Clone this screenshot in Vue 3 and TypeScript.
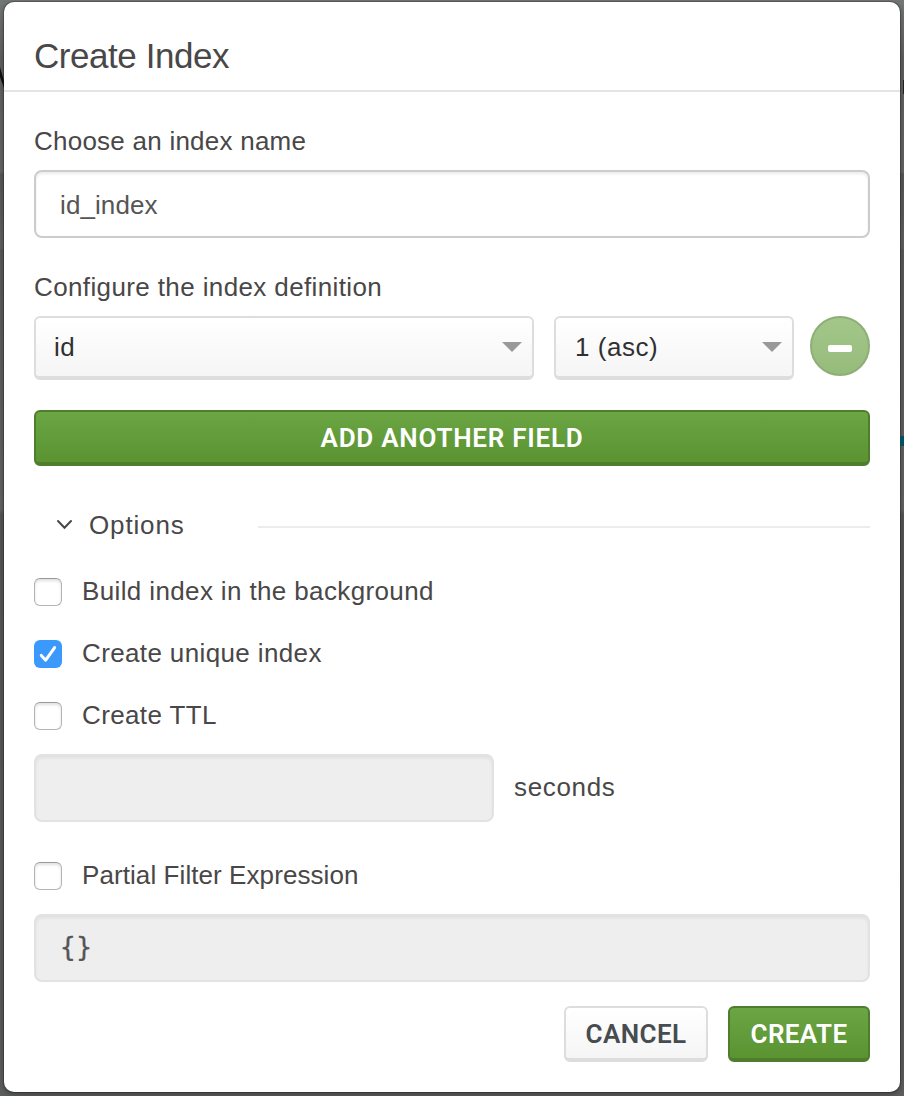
<script setup lang="ts">
import { reactive } from 'vue'

interface Option {
  key: string
  label: string
  checked: boolean
}

const basic = reactive<Option[]>([
  { key: 'background', label: 'Build index in the background', checked: false },
  { key: 'unique', label: 'Create unique index', checked: true },
  { key: 'ttl', label: 'Create TTL', checked: false },
])
const partial = reactive<Option>({ key: 'partial', label: 'Partial Filter Expression', checked: false })

function toggle(option: Option): void {
  option.checked = !option.checked
}
</script>

<template>
  <div class="backdrop">
    <svg class="behind glyph" width="4" height="22" viewBox="0 0 4 22"><path d="M0 0L4 14V21L0 10Z" fill="#111" /></svg>
    <i class="behind mark"></i>
    <i class="behind teal"></i>
    <section class="modal">
      <header class="header"><span class="title">Create Index</span></header>
      <div class="body">
        <div class="label name-label"><span>Choose an index name</span></div>
        <div class="input"><span class="name-value">id_index</span></div>

        <div class="label definition-label"><span>Configure the index definition</span></div>
        <div class="field-row">
          <div class="select field"><span>id</span>
            <svg class="caret" width="20" height="10" viewBox="0 0 20 10"><path d="M0 0H20L10 10Z" fill="#999" /></svg>
          </div>
          <div class="select order"><span>1 (asc)</span>
            <svg class="caret" width="20" height="10" viewBox="0 0 20 10"><path d="M0 0H20L10 10Z" fill="#999" /></svg>
          </div>
          <div class="remove"><span class="minus"></span></div>
        </div>
        <button class="btn primary add"><span>ADD ANOTHER FIELD</span></button>

        <div class="options-head">
          <svg class="chevron" width="18" height="12" viewBox="0 0 18 12"><path d="M2 2L8.5 8.7L15 2" fill="none" stroke="#494747" stroke-width="2" stroke-linecap="round" /></svg>
          <span class="options-text">Options</span>
          <span class="rule"></span>
        </div>

        <div v-for="option in basic" :key="option.key" class="check-row" :class="option.key" @click="toggle(option)">
          <span class="box" :class="{ on: option.checked }">
            <svg v-if="option.checked" width="28" height="28" viewBox="0 0 28 28"><path d="M7.3 15.4L11.7 20.2L20.6 7.6" fill="none" stroke="#fff" stroke-width="3" stroke-linecap="round" stroke-linejoin="round" /></svg>
          </span>
          <span class="check-text">{{ option.label }}</span>
        </div>
        <div class="ttl-row">
          <div class="input disabled ttl-input"></div>
          <span class="seconds">seconds</span>
        </div>

        <div class="check-row partial" @click="toggle(partial)">
          <span class="box" :class="{ on: partial.checked }"></span>
          <span class="check-text">{{ partial.label }}</span>
        </div>
        <div class="input disabled filter-input"><span class="mono">{}</span></div>

        <footer class="footer">
          <button class="btn plain"><span>CANCEL</span></button>
          <button class="btn primary create"><span>CREATE</span></button>
        </footer>
      </div>
    </section>
  </div>
</template>

<style>
body { margin: 0; background: #4d4c4b; }
</style>

<style scoped>
* { box-sizing: border-box; }
.backdrop {
  position: relative;
  height: 1096px;
  padding: 2px 4px 4px;
  overflow: hidden;
  background: linear-gradient(#737776 0, #5f605f 60px, #646665 172px, #585858 174px, #626160 248px, #5c5a58 250px, #656361 510px, #585654 514px, #5c5a58 1000px, #5c5e5e 1096px);
  font-family: "Liberation Sans", Arial, sans-serif;
  font-size: 26px;
  color: #494747;
}
.behind { position: absolute; }
.glyph { left: 0; top: 67px; }
.mark { left: 903px; top: 80px; width: 1px; height: 14px; background: #222; }
.teal { left: 900px; top: 436px; width: 4px; height: 10px; background: #00505f; z-index: 1; }
.modal {
  position: relative;
  height: 1090px;
  background: #fff;
  border-radius: 10px;
  box-shadow: 0 0 0 1px rgba(0, 0, 0, .2), 0 2px 6px rgba(0, 0, 0, .35);
}
.header {
  height: 90px;
  padding: 34px 30px 0;
  border-bottom: 2px solid #e4e4e4;
  line-height: 40px;
}
.title { font-size: 35px; letter-spacing: -.45px; }
.body { display: flex; flex-direction: column; padding: 29px 30px 0; }
.label { height: 40px; line-height: 40px; margin-bottom: 9px; }
.name-label { letter-spacing: .24px; }
.definition-label { margin-top: 29px; letter-spacing: .38px; }
.input {
  height: 68px;
  padding: 1px 24px 0;
  border: 2px solid #ccc;
  border-radius: 8px;
  line-height: 64px;
  color: #555;
  box-shadow: inset 0 2px 3px rgba(0, 0, 0, .08);
}
.disabled { background: #eee; border-color: #e2e2e2; box-shadow: inset 0 2px 3px rgba(0, 0, 0, .06); }
.name-value { letter-spacing: .1px; }
.field-row { display: flex; height: 64px; }
.select {
  display: flex;
  align-items: center;
  justify-content: space-between;
  height: 64px;
  padding: 0 10px 0 18px;
  border: 2px solid #ddd;
  border-bottom-width: 4px;
  border-radius: 6px;
  background: linear-gradient(#fff, #f5f5f5);
  color: #313030;
  letter-spacing: .4px;
}
.field { width: 500px; margin-right: 20px; }
.order { width: 240px; margin-right: 16px; padding-left: 19px; letter-spacing: .55px; }
.remove {
  display: flex;
  align-items: center;
  justify-content: center;
  width: 60px;
  height: 60px;
  padding-top: 4px;
  border: 2px solid #8eae78;
  border-radius: 50%;
  background: linear-gradient(#a2c789, #97bb7b);
}
.minus { width: 24px; height: 7px; border-radius: 2px; background: #fff; }
.btn {
  height: 56px;
  padding: 3px 0 0;
  border: 2px solid #ddd;
  border-bottom-width: 4px;
  border-radius: 6px;
  font: 600 26px/47px Roboto, "Liberation Sans", Arial, sans-serif;
  letter-spacing: .4px;
  text-align: center;
}
.primary { border-color: #4e7d2d; background: linear-gradient(#6ba544, #5b9331); color: #fff; }
.plain { width: 144px; margin-right: 20px; background: linear-gradient(#fff, #f5f5f5); color: #464c4f; }
.create { width: 142px; }
.add { width: 836px; margin-top: 30px; letter-spacing: .75px; }
.options-head { display: flex; align-items: center; height: 40px; margin: 39px 0 27px; padding-left: 22px; }
.chevron { margin-right: 15px; }
.options-text { width: 169px; letter-spacing: .85px; }
.rule { flex: 1; height: 2px; margin-top: 4px; background: #ececec; }
.check-row { display: flex; align-items: center; height: 40px; margin-bottom: 22px; }
.check-row.ttl { margin-bottom: 18px; }
.check-row.partial { margin: 34px 0 18px; }
.box {
  width: 28px;
  height: 28px;
  margin-right: 20px;
  border: 1px solid #b4b4b4;
  border-top-color: #999;
  border-radius: 6px;
  background: #fff;
  box-shadow: inset 0 2px 3px rgba(0, 0, 0, .12);
}
.box.on { border: 0; background: #3b99fc; box-shadow: none; }
.box svg { display: block; }
.check-text { padding-bottom: 2px; letter-spacing: .37px; }
.partial .check-text { letter-spacing: .08px; }
.ttl-row { display: flex; align-items: center; }
.ttl-input { width: 460px; margin-right: 20px; }
.seconds { padding-bottom: 2px; letter-spacing: .65px; }
.filter-input { padding-top: 0; line-height: 63px; }
.mono { font-family: "DejaVu Sans Mono", monospace; letter-spacing: .5px; -webkit-text-stroke: .3px #555; }
.footer { display: flex; justify-content: flex-end; margin-top: 24px; }
</style>
